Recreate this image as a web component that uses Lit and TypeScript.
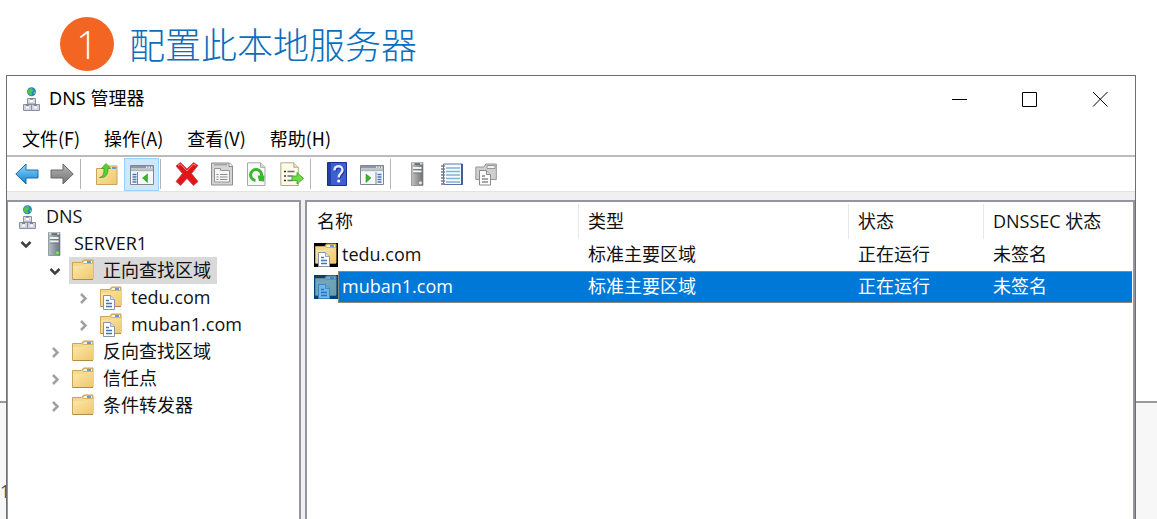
import { LitElement, html, css, svg, nothing } from "lit";
import { customElement, property, state } from "lit/decorators.js";
import { classMap } from "lit/directives/class-map.js";

const folderShape = svg`
  <path d="M1.500 3.500h9l2-2.500h9.500v19h-20.500z" fill="#f5d78d" stroke="#c9a45a"/>
  <path d="M11.500 4l1.500-2.500h8.500v3h-9z" fill="#fdf3d4" stroke="#c9a45a" stroke-width=".8"/>
  <path d="M16 3h4" stroke="#2f8be6" stroke-width="1.600"/>
  <path d="M2 7h10l2-2h8v15h-20z" fill="url(#fold)"/>
  <path d="M1.500 20.500h20.500" stroke="#b18b45"/>`;

const folderFill = svg`
  <defs><linearGradient id="fold" x1="0" y1="0" x2="1" y2="1">
    <stop offset="0" stop-color="#fde9ac"/><stop offset="1" stop-color="#efc76e"/>
  </linearGradient></defs>`;

const page = (line: string, edge: string) => svg`
  <path d="M4.500 9.500h7l4 4v10h-11z" fill="#fff" stroke=${edge}/>
  <path d="M11.500 9.500v4h4" fill="#dde3ea" stroke=${edge} stroke-width=".8"/>
  <path d="M7 14.500h3M7 17.500h6M7 20.500h6" stroke=${line} stroke-width="1.500"/>`;

const chassis = (a: string, b: string, led: string) => svg`
  <defs><linearGradient id="box" x1="0" y1="0" x2="1" y2="0">
    <stop offset="0" stop-color=${a}/><stop offset="1" stop-color=${b}/>
  </linearGradient></defs>
  <path d="M6.500 .5h11.500v23h-11.500z" fill="url(#box)" stroke=${b} stroke-width=".6"/>
  <path d="M7 .5h10.500v2h-10.500z" fill="#d5d8da"/>
  <path d="M9.500 2h5.500" stroke="#3a3d40" stroke-width="1.200"/>
  <path d="M8 6h8.500M8 9.500h8.500" stroke="#eef1f2" stroke-width="2"/>
  <path d="M8 7.500h8.500M8 11h8.500" stroke="#5d6468" stroke-width=".6"/>
  <circle cx="15.500" cy="20.800" r="1.600" fill=${led}/>`;

const consolePane = (flip: boolean) => svg`
  <path d="M.5 3.500h23v19h-23z" fill="#f6f7f8" stroke="#80868c"/>
  <path d="M1 4h22v2.500h-22z" fill="#8e98a3"/>
  <path d="M1 8.200h22" stroke="#aeb6be" stroke-width="2"/>
  <path d="M16 5.200h1.500M18.500 5.200h1.500M21 5.200h1.500" stroke="#fff" stroke-width="1.200"/>
  <path d="M${flip ? 16 : 7.5} 10v12" stroke="#80868c"/>
  <path d="${flip ? "M17.500 12.500h4M17.500 15h4M17.500 17.500h4M17.500 20h4" : "M2.500 12.500h4M2.500 15h4M2.500 17.500h4M2.500 20h4"}" stroke="#3a79c8" stroke-width="1.500"/>
  <path d="${flip ? "M6 12l5 4-5 4.500z" : "M17.500 12l-5 4 5 4.500z"}" fill="#3cb52c" stroke="#27861c" stroke-width=".5"/>`;

const sheet = svg`
  <path d="M2.500 .8h13l4.500 4.500v18.200h-17.500z" fill="#fafafa" stroke="#a9a9a9"/>
  <path d="M15.500 .8v4.500h4.500" fill="#dedede" stroke="#a9a9a9"/>`;

const ICONS: Record<string, unknown> = {
  dns: svg`
    <circle cx="12.500" cy="4.800" r="4.500" fill="#2a86c7"/>
    <path d="M9.500 2.500l3-1.500 2 2.500-2 2 .5 2.500-2 .5-2.500-3z" fill="#4fc45a"/>
    <path d="M14.500 5.500l2-1-.5 3z" fill="#7ad67a"/>
    <path d="M8.500 11.500h8v5.500h-8z" fill="#d9dbe4" stroke="#8d90a1"/>
    <path d="M4.500 17.500h8v6h-8zM12.500 17.500h8v6h-8z" fill="#cfd1dc" stroke="#8d90a1"/>
    <path d="M11 14h3M7 20.500h3M15 20.500h3" stroke="#fff" stroke-width="2"/>
    <path d="M11 12h3M7 18.200h3M15 18.200h3" stroke="#62667a"/>`,
  server: chassis("#b4bfc3", "#68777e", "#6cf22c"),
  serverGray: chassis("#c2c2c2", "#727272", "#e4e4e4"),
  folder: svg`${folderFill}${folderShape}`,
  zone: svg`${folderFill}${folderShape}${page("#3d78bd", "#8695a5")}`,
  zoneDark: svg`<path d="M0 0h24v24h-24z" fill="#000"/>${folderFill}${folderShape}${page("#3d78bd", "#8695a5")}`,
  back: svg`
    <defs><linearGradient id="bl" x1="0" y1="0" x2="0" y2="1"><stop offset="0" stop-color="#8fdcff"/><stop offset="1" stop-color="#0e7fd0"/></linearGradient></defs>
    <path d="M.8 12L11 2v6h12v8h-12v6z" fill="url(#bl)" stroke="#27699f" stroke-linejoin="round"/>`,
  forward: svg`
    <defs><linearGradient id="gr" x1="0" y1="0" x2="0" y2="1"><stop offset="0" stop-color="#b5b5b5"/><stop offset="1" stop-color="#747474"/></linearGradient></defs>
    <path d="M23.200 12L13 2v6h-12v8h12v6z" fill="url(#gr)" stroke="#666" stroke-linejoin="round"/>`,
  up: svg`${folderFill}
    <path d="M1.500 6.500h9l2-2.500h9.500v18.500h-20.500z" fill="url(#fold)" stroke="#c9a45a"/>
    <path d="M17 6h4" stroke="#2f8be6" stroke-width="1.500"/>
    <path d="M4.500 15.500c4-1 4.500-4 4.500-9h-2.500l4.500-5 4.500 5h-2.500c0 6-2 9.500-8.500 9z" fill="#56d035" stroke="#2f9420" stroke-width=".7"/>`,
  tree: consolePane(false),
  action: consolePane(true),
  remove: svg`
    <path d="M1 4l4.500-3.500 6.500 6.500 6.500-6.500 4.500 3-6.500 8 6.500 8-4.500 4-6.500-7-6.500 7-4.500-4 6.500-8z" fill="#e3151b" stroke="#b9464a" stroke-width=".8" stroke-linejoin="round"/>
    <path d="M3 4l2.500-2 6.500 7 6.500-7 2.500 1.500" stroke="#ff8a82" fill="none"/>`,
  properties: svg`
    <path d="M1.500 1h18l3 3v19h-21z" fill="#d4d4d4" stroke="#8c8c8c"/>
    <path d="M4 2.800h13" stroke="#8c8c8c"/><path d="M19 1v3.500h3.500" fill="#fff" stroke="#8c8c8c"/>
    <path d="M4.500 6.500h6v2h9v11.500h-15z" fill="#f7f7f7" stroke="#969696"/>
    <path d="M6.500 12.500h2M10 12.500h7.500M6.500 15h2M10 15h7.500M6.500 17.500h2M10 17.500h7.500" stroke="#8b8b8b"/>`,
  refresh: svg`${sheet}
    <path d="M10.500 18.500a5.500 5.500 0 1 1 6-4.500" fill="none" stroke="#38b82b" stroke-width="3"/>
    <path d="M12.500 13.500h7l-.5 6-5-.5z" fill="#38b82b"/>`,
  exportList: svg`
    <path d="M.8 .8h13l4.500 4.500v18.200h-17.500z" fill="#fffbe6" stroke="#b0aa94"/>
    <path d="M13.800 .8v4.500h4.500" fill="#e8e2c8" stroke="#b0aa94"/>
    <path d="M4 9.500h2M4 14h2M4 18.500h2" stroke="#333" stroke-width="1.500"/><path d="M7.500 9.500h7M7.500 14h5M7.500 18.500h5" stroke="#6b6a85" stroke-width="1.300"/>
    <path d="M12 14h5v-3.500l6.500 6-6.500 5.500v-3.500h-5z" fill="#6bdd42" stroke="#379e26" stroke-width=".8"/>`,
  help: svg`
    <path d="M2.500 .5h19v23h-19z" fill="#3c5fd3" stroke="#1b2f8c"/>
    <path d="M3 1h3v22h-3z" fill="#2340a8"/>
    <path d="M9.500 8.500c0-5.500 8-5.500 8-.5 0 3.500-3.800 3.500-3.800 7.500" fill="none" stroke="#1d3085" stroke-width="2.600" transform="translate(.8 .8)"/>
    <path d="M9.500 8.500c0-5.500 8-5.500 8-.5 0 3.500-3.800 3.500-3.800 7.500" fill="none" stroke="#e8ebff" stroke-width="2.400"/>
    <circle cx="13.700" cy="19" r="1.600" fill="#fff"/>`,
  notebook: svg`
    <path d="M3.500 2h19v20.500h-19z" fill="#f7fbff" stroke="#5c74a8"/>
    <path d="M21.800 2v21" stroke="#3a4f92" stroke-width="1.500"/>
    <path d="M6 6h14M6 9.500h14M6 13h14M6 16.500h14M6 20h14" stroke="#7fb3d8" stroke-width="1.300"/>
    <path d="M1 4h4M1 7h4M1 10h4M1 13h4M1 16h4M1 19h4M1 22h4" stroke="#7c7c7c" stroke-width="1.300"/>`,
  zones: svg`
    <path d="M.8 5h8l2-3h10.500v15.500h-20.500z" fill="#cfcfcf" stroke="#979797"/>
    <path d="M12 3.500h8v3h-8z" fill="#f2f2f2" stroke="#979797"/>
    <path d="M4.500 8.500h7l4 4v10.500h-11z" fill="#fff" stroke="#8a8a8a"/>
    <path d="M11.500 8.500v4h4" fill="#ddd" stroke="#8a8a8a"/>
    <path d="M7 14h3M7 17h6M7 20h6" stroke="#8a8a8a" stroke-width="1.300"/>`,
};

@customElement("mmc-icon")
class MmcIcon extends LitElement {
  @property() name = "";
  static styles = css`
    :host { display: block; width: 24px; height: 24px; flex: none; }
    svg { display: block; width: 100%; height: 100%; }
  `;
  render() {
    return html`<svg viewBox="0 0 24 24" fill="none" aria-hidden="true">${ICONS[this.name]}</svg>`;
  }
}

interface TreeNode { label: string; icon: string; level: number; open?: boolean; selected?: boolean; }

const NODES: TreeNode[] = [
  { label: "DNS", icon: "dns", level: 0 },
  { label: "SERVER1", icon: "server", level: 1, open: true },
  { label: "正向查找区域", icon: "folder", level: 2, open: true, selected: true },
  { label: "tedu.com", icon: "zone", level: 3, open: false },
  { label: "muban1.com", icon: "zone", level: 3, open: false },
  { label: "反向查找区域", icon: "folder", level: 2, open: false },
  { label: "信任点", icon: "folder", level: 2, open: false },
  { label: "条件转发器", icon: "folder", level: 2, open: false },
];

@customElement("dns-tree")
class DnsTree extends LitElement {
  static styles = css`
    :host { display: block; }
    ul { list-style: none; margin: 0; padding: 1px 0 0; }
    li { display: flex; align-items: center; height: 27px; }
    .l0 { padding-left: 5px; }
    .l1 { padding-left: 6px; }
    .l2 { padding-left: 35px; }
    .l3 { padding-left: 63px; }
    .twist { border: 0; background: none; padding: 0; width: 26px; height: 24px; display: flex; align-items: center; color: #a0a0a0; }
    .open { color: #404040; }
    .twist svg { display: block; margin: 0 5px; width: 14px; height: 14px; }
    .node { display: flex; align-items: center; height: 27px; gap: 8px; padding: 0 6px 0 2px; color: #111; line-height: 24px; white-space: nowrap; }
    .l0 .node { gap: 7px; }
    .label { padding-bottom: 2px; }
    .selected { background: #d9d9d9; }
  `;
  render() {
    return html`<ul role="tree" aria-label="DNS">
      ${NODES.map((n) => html`<li class="l${n.level}" role="treeitem" aria-selected=${n.selected ? "true" : "false"}>
        ${n.level === 0 ? nothing : html`<button class=${classMap({ twist: true, open: !!n.open })} aria-label=${n.label} aria-expanded=${n.open ? "true" : "false"}>
          <svg viewBox="0 0 14 14" fill="none" stroke="currentColor" stroke-width="2.500"><path d=${n.open ? "M2.500 5l4.500 4.500 4.500-4.500" : "M5 3l4.500 4.500-4.500 4.500"} /></svg>
        </button>`}
        <span class=${classMap({ node: true, selected: !!n.selected })}><mmc-icon name=${n.icon}></mmc-icon><span class="label">${n.label}</span></span>
      </li>`)}
    </ul>`;
  }
}

const ZONES = [
  { name: "tedu.com", type: "标准主要区域", status: "正在运行", sec: "未签名" },
  { name: "muban1.com", type: "标准主要区域", status: "正在运行", sec: "未签名" },
];

@customElement("zone-list")
class ZoneList extends LitElement {
  @state() private current = 1;
  static styles = css`
    :host { display: block; padding: 0 1px; }
    table { width: 100%; table-layout: fixed; border-collapse: separate; border-spacing: 0; color: #111; }
    .name { width: 271px; }
    .type { width: 270px; }
    .status { width: 135px; }
    th { height: 37px; padding: 0 0 0 9px; box-sizing: border-box; text-align: left; font-weight: 400; white-space: nowrap; background: linear-gradient(#e8e8e8, #e8e8e8) right 2px / 1px 36px no-repeat; }
    th:last-child { background: none; }
    td { height: 32px; padding: 0 0 2px 9px; box-sizing: border-box; white-space: nowrap; }
    td:first-child { padding: 0; }
    .item { display: flex; align-items: center; height: 32px; padding-left: 6px; }
    .label { flex: 1; height: 32px; line-height: 30px; box-sizing: border-box; padding-left: 4px; }
    .picked td { color: #fff; background: #0078d7; box-shadow: inset 0 1px #8b8878, inset 0 -1px #8b8878; }
    .picked td:first-child { background: none; box-shadow: none; }
    .picked .label { background: #0078d7; box-shadow: inset 1px 1px #8b8878, inset 0 -1px #8b8878; }
    .tint { position: relative; }
    .picked .tint::after { content: ""; position: absolute; inset: 0; background: #0078d7; opacity: .55; }
  `;
  render() {
    return html`<table>
      <thead><tr>
        <th class="name" scope="col">名称</th><th class="type" scope="col">类型</th>
        <th class="status" scope="col">状态</th><th scope="col">DNSSEC 状态</th>
      </tr></thead>
      <tbody>${ZONES.map((z, i) => html`<tr class=${classMap({ picked: i === this.current })} @click=${() => (this.current = i)}>
        <td><div class="item"><span class="tint"><mmc-icon name="zoneDark"></mmc-icon></span><span class="label">${z.name}</span></div></td>
        <td>${z.type}</td><td>${z.status}</td><td>${z.sec}</td>
      </tr>`)}</tbody>
    </table>`;
  }
}

const MENUS = ["文件(F)", "操作(A)", "查看(V)", "帮助(H)"];

const TOOLS: [string, string][][] = [
  [["back", "后退"], ["forward", "前进"]],
  [["up", "向上"], ["tree", "控制台树"]],
  [["remove", "删除"], ["properties", "属性"], ["refresh", "刷新"], ["exportList", "导出列表"]],
  [["help", "帮助"], ["action", "操作窗格"]],
  [["serverGray", "服务器"], ["notebook", "记录"], ["zones", "区域"]],
];

@customElement("app-root")
class AppRoot extends LitElement {
  static styles = css`
    :host { display: flex; flex-direction: column; position: relative; height: 100vh; overflow: hidden; background: #fff; color: #000; font: 18px/24px "Open Sans", "Noto Sans CJK SC", sans-serif; }
    .backdrop { position: absolute; left: 0; right: 0; top: 401px; bottom: 0; box-sizing: border-box; padding-top: 76px; border-top: 2px solid #999; background: #f7f7f7; color: #555; }
    .step { display: flex; align-items: center; gap: 15px; height: 75px; flex: none; box-sizing: border-box; padding: 13px 0 0 60px; }
    .badge { display: grid; place-items: center; width: 54px; height: 54px; border-radius: 50%; background: #f26522; color: #fff; font-size: 38px; line-height: 54px; font-weight: 300; }
    h1 { margin: 0; padding-bottom: 2px; color: #0a6ebd; font: 300 36px/54px "Noto Sans CJK SC", sans-serif; }
    .window { position: relative; flex: 1; min-height: 0; display: flex; flex-direction: column; margin: 0 21px 0 6px; border: 1px solid #6d6e70; border-bottom: 0; background: #fff; }
    header { display: flex; align-items: center; height: 45px; flex: none; padding-left: 12px; }
    h2 { margin: 0; padding: 0 0 1px 6px; flex: 1; font: inherit; font-family: "Noto Sans", "Noto Sans CJK SC", sans-serif; }
    button { font: inherit; color: inherit; border: 0; background: none; padding: 0; }
    .caption { width: 70px; height: 45px; display: grid; place-items: center; }
    .caption svg { display: block; width: 16px; height: 16px; }
    nav { display: flex; align-items: center; height: 34px; flex: none; padding-left: 15px; gap: 24px; font-family: "Noto Sans CJK SC", sans-serif; }
    .tools { display: flex; align-items: center; height: 36px; flex: none; box-sizing: border-box; border-top: 2px solid #bcbcbc; padding-left: 2px; }
    .tool { width: 35px; height: 33px; display: grid; place-items: center; box-sizing: border-box; }
    .on { background: #cce8ff; border: 1px solid #99d1ff; }
    .sep { width: 1px; height: 30px; margin: 0 8px 0 1px; background: #b4b4b4; }
    .body { flex: 1; min-height: 0; display: grid; grid-template-columns: 294px 1fr; gap: 4px; background: #f0f0f0; padding-top: 8px; border-top: 1px solid #e3e3e3; }
    .pane { border: 2px solid #9396a0; border-bottom: 0; background: #fff; overflow: hidden; }
    .body .pane:first-child { border-left-width: 1px; }
  `;
  render() {
    return html`
      <div class="backdrop">1</div>
      <div class="step"><span class="badge">1</span><h1>配置此本地服务器</h1></div>
      <main class="window">
        <header>
          <mmc-icon name="dns"></mmc-icon><h2>DNS 管理器</h2>
          <button class="caption" aria-label="最小化"><svg viewBox="0 0 16 16" stroke="#000"><path d="M0 8.500h15" /></svg></button>
          <button class="caption" aria-label="最大化"><svg viewBox="0 0 16 16" stroke="#000" fill="none"><path d="M.5 1.500h14v14h-14z" /></svg></button>
          <button class="caption" aria-label="关闭"><svg viewBox="0 0 16 16" stroke="#000"><path d="M1 1l14.500 14.500M15.500 1l-14.500 14.500" /></svg></button>
        </header>
        <nav>${MENUS.map((m) => html`<button>${m}</button>`)}</nav>
        <div class="tools" role="toolbar">
          ${TOOLS.map((group, i) => html`${i ? html`<span class="sep"></span>` : nothing}${group.map(([icon, label]) => html`<button class=${classMap({ tool: true, on: icon === "tree" })} aria-label=${label}><mmc-icon name=${icon}></mmc-icon></button>`)}`)}
        </div>
        <div class="body">
          <section class="pane"><dns-tree></dns-tree></section>
          <section class="pane"><zone-list></zone-list></section>
        </div>
      </main>`;
  }
}
